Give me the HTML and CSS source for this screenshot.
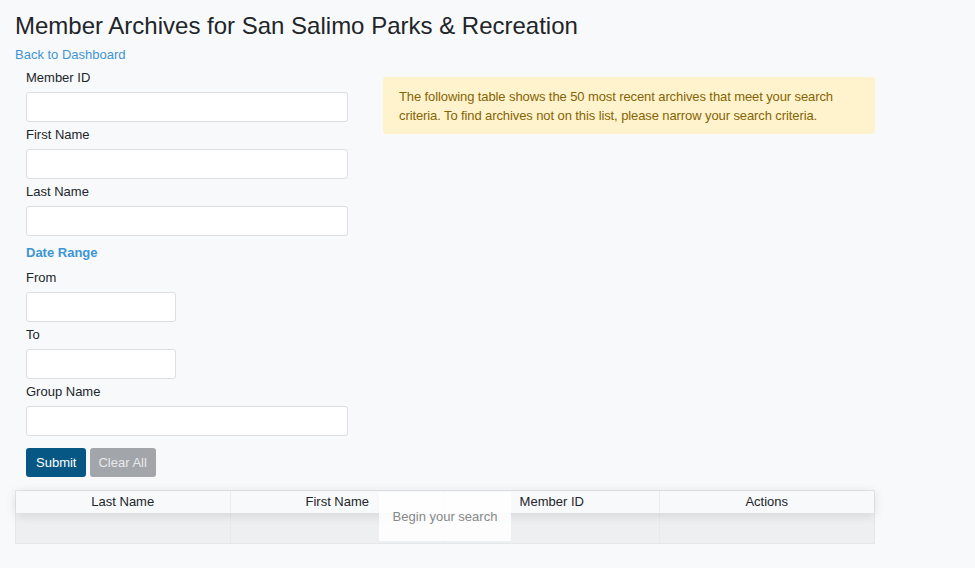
FILE: index.html
```html
<!DOCTYPE html>
<html lang="en">
<head>
    <meta charset="UTF-8">
    <meta name="viewport" content="width=device-width, initial-scale=1.0">
    <title>Member Archives</title>
    <link rel="stylesheet" href="styles.css">
</head>
<body>
    <h1>Member Archives for San Salimo Parks &amp; Recreation</h1>
    <a class="back-link" href="#">Back to Dashboard</a>

    <div class="search-row">
        <form class="search-form">
            <label>Member ID</label>
            <input type="text" class="field">
            <label>First Name</label>
            <input type="text" class="field">
            <label>Last Name</label>
            <input type="text" class="field">

            <div class="section-title">Date Range</div>
            <label>From</label>
            <input type="text" class="field field-short">
            <label>To</label>
            <input type="text" class="field field-short">

            <label>Group Name</label>
            <input type="text" class="field">

            <div class="buttons">
                <button type="button" class="btn btn-submit">Submit</button>
                <button type="button" class="btn btn-clear">Clear All</button>
            </div>
        </form>

        <div class="notice">
            The following table shows the 50 most recent archives that meet your search criteria. To find archives not on this list, please narrow your search criteria.
        </div>
    </div>

    <div class="results">
        <div class="results-head">
            <div class="cell">Last Name</div>
            <div class="cell">First Name</div>
            <div class="cell">Member ID</div>
            <div class="cell">Actions</div>
        </div>
        <div class="results-body">
            <div class="cell"></div>
            <div class="cell"></div>
            <div class="cell"></div>
            <div class="cell"></div>
        </div>
        <div class="no-data">Begin your search</div>
    </div>
</body>
</html>
```

FILE: styles.css
```css
body {
    background-color: #f8f9fb;
    color: #212529;
    font-family: "Liberation Sans", Arial, sans-serif;
    font-size: 13px;
    margin: 0;
    padding: 0 15px;
}
h1 {
    font-size: 24px;
    font-weight: normal;
    margin: 0;
    padding-top: 10px;
    line-height: 32px;
}
.back-link {
    display: block;
    color: #3e95d6;
    text-decoration: none;
    line-height: 18px;
    margin-top: 4px;
}
.search-row {
    display: flex;
    gap: 35px;
    margin-top: 4px;
}
.search-form {
    width: 322px;
    padding-left: 11px;
    display: flex;
    flex-direction: column;
    align-items: flex-start;
}
.search-form label {
    display: block;
    line-height: 20px;
    margin-bottom: 4px;
}
.field {
    box-sizing: border-box;
    width: 322px;
    height: 30px;
    margin: 0 0 3px 0;
    border: 1px solid #dcdee2;
    border-radius: 3px;
    background: #fff;
}
.field-short {
    width: 150px;
}
.section-title {
    color: #3e95d6;
    font-weight: bold;
    line-height: 20px;
    margin: 4px 0 5px 0;
}
.buttons {
    display: flex;
    gap: 4px;
    margin-top: 9px;
}
.btn {
    font-family: inherit;
    font-size: 13px;
    height: 29px;
    border: none;
    border-radius: 3px;
    padding: 0 10px;
    color: #fff;
}
.btn-submit {
    background-color: #075785;
}
.btn-clear {
    background-color: #a2a5a9;
    color: #e8e9ea;
    padding: 0 9px 0 8px;
}
.notice {
    box-sizing: border-box;
    width: 492px;
    height: 57px;
    margin-top: 9px;
    padding: 10px 16px;
    line-height: 19px;
    letter-spacing: -0.1px;
    background-color: #fff3cd;
    color: #856404;
    border-radius: 3px;
}
.results {
    position: relative;
    width: 860px;
    margin-top: 13px;
    border: 1px solid #e6e7e9;
    box-sizing: border-box;
}
.results-head, .results-body {
    display: grid;
    grid-template-columns: repeat(4, 1fr);
}
.results-head {
    height: 22px;
    background-color: #f8f9fb;
    box-shadow: 0 2px 12px rgba(0, 0, 0, 0.12);
    position: relative;
}
.results-head .cell {
    text-align: center;
    line-height: 22px;
    color: #212529;
    border-right: 1px solid #ececee;
}
.results-body {
    height: 30px;
    background-color: #eeeff1;
}
.results-body .cell {
    border-right: 1px solid #e8e9eb;
}
.cell:last-child {
    border-right: none;
}
.no-data {
    position: absolute;
    left: 363px;
    top: 1px;
    width: 132px;
    height: 49px;
    line-height: 49px;
    text-align: center;
    color: #888;
    background: rgba(255, 255, 255, 0.85);
}
```
